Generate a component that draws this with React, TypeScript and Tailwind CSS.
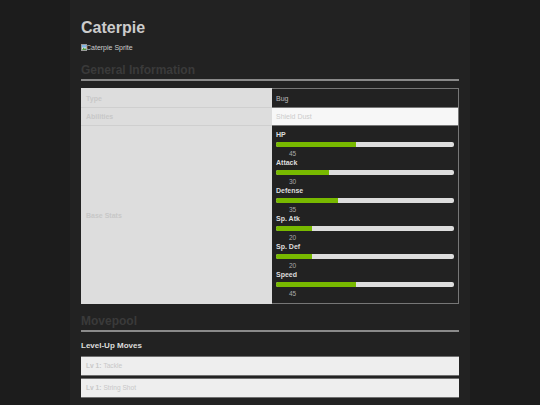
import React from "react";

type Stat = { name: string; value: number };

const stats: Stat[] = [
  { name: "HP", value: 45 },
  { name: "Attack", value: 30 },
  { name: "Defense", value: 35 },
  { name: "Sp. Atk", value: 20 },
  { name: "Sp. Def", value: 20 },
  { name: "Speed", value: 45 },
];

const moves = [
  { level: 1, name: "Tackle" },
  { level: 1, name: "String Shot" },
];

function BrokenImage() {
  return (
    <svg width="6" height="7" viewBox="0 0 6 7" className="shrink-0">
      <rect x="0.5" y="0.5" width="5" height="6" fill="#e8e8e8" stroke="#9a9a9a" strokeWidth="1" />
      <rect x="1" y="1" width="4" height="2.5" fill="#7fb6e6" />
      <path d="M1 6 L2.5 3.5 L4 5 L5 4 L5 6 Z" fill="#4a9a3a" />
    </svg>
  );
}

function StatBar({ stat }: { stat: Stat }) {
  return (
    <div className="mb-[1px]">
      <div className="h-[8px] text-[7px] leading-[8px] font-bold text-[#dddddd]">{stat.name}</div>
      <div className="mt-[3px] h-[5px] rounded-[2px] bg-[#dddddd] overflow-hidden">
        <div className="h-full bg-[#78b900]" style={{ width: `${stat.value}%` }} />
      </div>
      <div className="mt-[3px] ml-[13px] h-[8px] text-[6.5px] leading-[8px] text-[#aaaaaa]">{stat.value}</div>
    </div>
  );
}

function SectionTitle({ children }: { children: React.ReactNode }) {
  return (
    <h2 className="text-[12px] leading-none font-bold text-[#3a3a3a] pb-[3px] border-b-2 border-[#8a8a8a]">
      {children}
    </h2>
  );
}

export default function App() {
  return (
    <div className="min-h-screen bg-[#1c1c1c]" style={{ fontFamily: '"Liberation Sans", Arial, sans-serif' }}>
      <div className="mx-auto w-[400px] min-h-screen bg-[#222222] px-[11px] pt-[20px] pb-8">
        <h1 className="text-[16px] leading-none font-bold text-[#cccccc]">Caterpie</h1>

        <div className="mt-[8px] flex items-center h-[7px] text-[7px] leading-none text-[#cccccc]">
          <BrokenImage />
          <span className="ml-[-1px]">Caterpie Sprite</span>
        </div>

        <div className="mt-[13px]">
          <SectionTitle>General Information</SectionTitle>
        </div>

        {/* info table */}
        <div className="mt-[7px] grid grid-cols-[191px_187px] text-[7px] leading-none">
          <div className="h-[19px] bg-[#dddddd] border-t border-[#dddddd] flex items-center px-[5px] font-bold text-[#c8c8c8]">
            Type
          </div>
          <div className="h-[19px] bg-[#222222] border-t border-r border-[#777777] flex items-center px-[4px] text-[#bbbbbb]">
            Bug
          </div>

          <div className="h-[18px] bg-[#dddddd] border-t border-[#cfcfcf] flex items-center px-[5px] font-bold text-[#c8c8c8]">
            Abilities
          </div>
          <div className="h-[18px] bg-[#f7f7f7] border-t border-r border-[#777777] flex items-center px-[4px] text-[#cccccc]">
            Shield Dust
          </div>

          <div className="h-[179px] bg-[#dddddd] border-t border-[#cfcfcf] flex items-center px-[5px] font-bold text-[#c8c8c8]">
            Base Stats
          </div>
          <div className="h-[179px] bg-[#222222] border-t border-r border-b border-[#777777] px-[4px] pt-[5px]">
            {stats.map((s) => (
              <StatBar key={s.name} stat={s} />
            ))}
          </div>
        </div>

        <div className="mt-[11px]">
          <SectionTitle>Movepool</SectionTitle>
        </div>

        <h3 className="mt-[10px] text-[8px] leading-none font-bold text-[#dddddd]">Level-Up Moves</h3>

        <ul className="mt-[6px] flex flex-col gap-[2px]">
          {moves.map((m) => (
            <li
              key={m.name}
              className="h-[20px] bg-[#eeeeee] border-t border-b border-[#6f6f6f] flex items-center px-[5px] text-[6.6px] leading-none text-[#c8c8c8]"
            >
              <span className="font-bold">Lv {m.level}:</span>
              <span className="ml-[2px]">{m.name}</span>
            </li>
          ))}
        </ul>
      </div>
    </div>
  );
}
